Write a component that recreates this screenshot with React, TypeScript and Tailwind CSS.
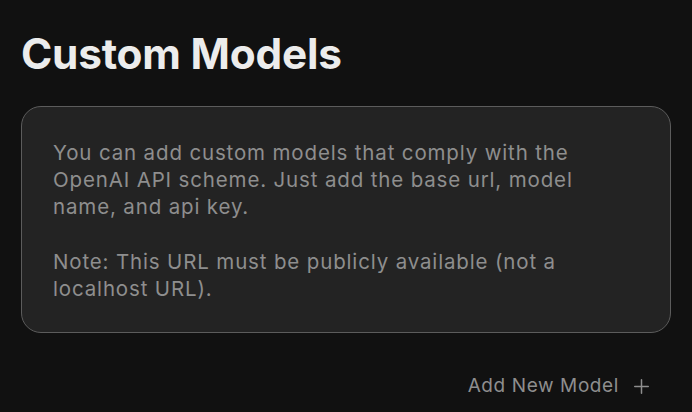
import React from "react";

export default function App() {
  return (
    <div className="w-[692px] h-[412px] bg-[#111111] overflow-hidden" style={{ fontFamily: "Inter, 'Noto Sans', sans-serif" }}>
      <div className="px-[21px] pt-[28px]">
        <h1 className="text-[42.3px] leading-[52px] font-bold text-[#ececec] tracking-[-0.2px]">Custom Models</h1>
        <div className="mt-[26px] rounded-[20px] border-[1.5px] border-[#5c5c5c] bg-[#232323] pl-[31px] pr-[76px] pt-[32px] pb-[30px] text-[#8e8e8e] text-[20.5px] leading-[27px] tracking-[0.85px]">
          <p>You can add custom models that comply with the OpenAI API scheme. Just add the base url, model name, and api key.</p>
          <p className="mt-[28px]">Note: This URL must be publicly available (not a localhost URL).</p>
        </div>
        <div className="flex justify-end mt-[41px] pr-[22px]">
          <button className="flex items-center gap-[15px] text-[#8e8e8e] text-[19px] leading-[24px] tracking-[0.6px]">
            <span>Add New Model</span>
            <svg width="15" height="15" viewBox="0 0 15 15" fill="none" stroke="#8e8e8e" strokeWidth="1.5" strokeLinecap="round">
              <path d="M7.5 0.75v13.5M0.75 7.5h13.5" />
            </svg>
          </button>
        </div>
      </div>
    </div>
  );
}
